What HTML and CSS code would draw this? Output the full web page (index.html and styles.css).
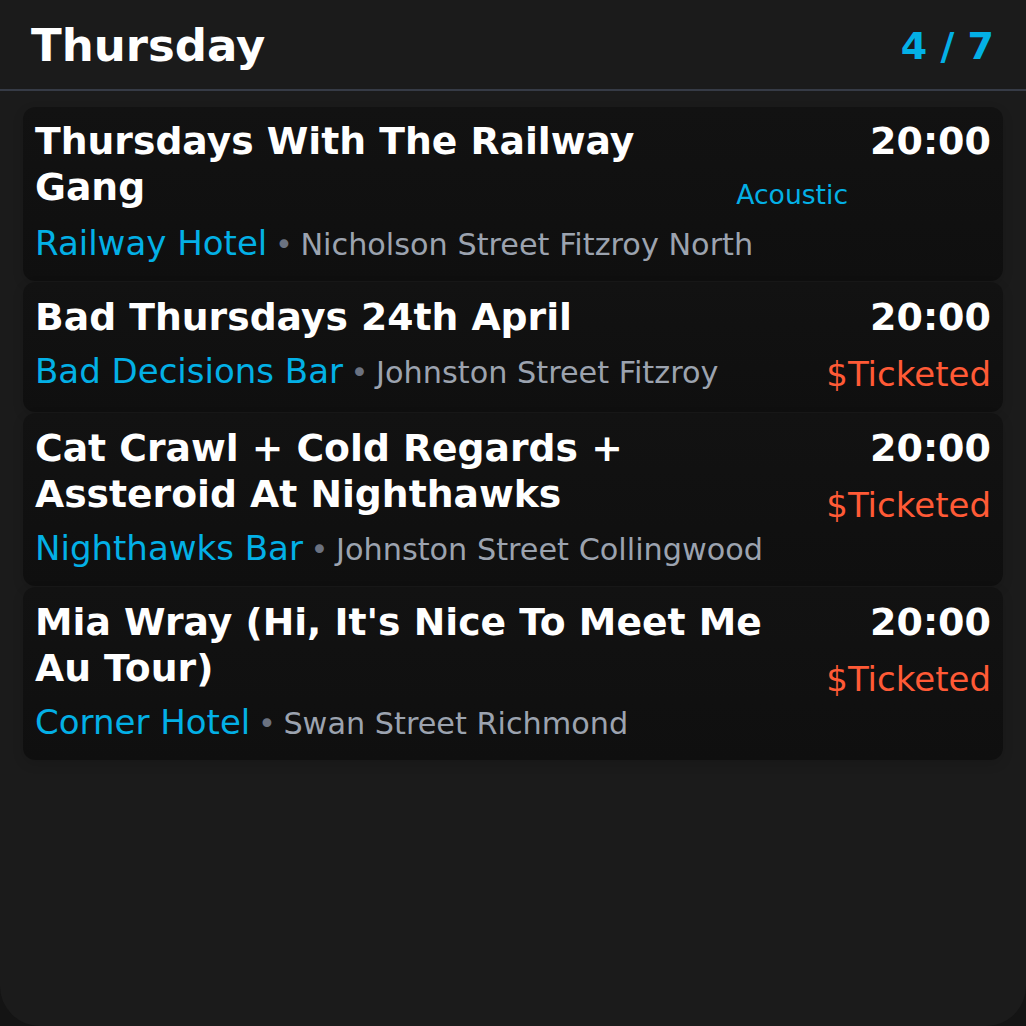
FILE: index.html
```html
<!DOCTYPE html>
<html lang="en">
<head>
<meta charset="utf-8">
<title>Thursday</title>
<link rel="stylesheet" href="styles.css">
</head>
<body>
<div class="screen">
  <header class="header">
    <h1 class="day">Thursday</h1>
    <div class="counter">4 / 7</div>
  </header>
  <div class="list">
    <div class="card">
      <div class="main">
        <div class="head">
          <div class="title">Thursdays With The Railway Gang</div>
          <div class="tags"><span class="tag">Acoustic</span></div>
        </div>
        <div class="venue"><span class="vname">Railway Hotel</span><span class="addr"><span class="dot"> • </span>Nicholson Street Fitzroy North</span></div>
      </div>
      <div class="side">
        <div class="time">20:00</div>
      </div>
    </div>
    <div class="card">
      <div class="main">
        <div class="head">
          <div class="title">Bad Thursdays 24th April</div>
        </div>
        <div class="venue"><span class="vname">Bad Decisions Bar</span><span class="addr"><span class="dot"> • </span>Johnston Street Fitzroy</span></div>
      </div>
      <div class="side">
        <div class="time">20:00</div>
        <div class="price">$Ticketed</div>
      </div>
    </div>
    <div class="card">
      <div class="main">
        <div class="head">
          <div class="title">Cat Crawl + Cold Regards + Assteroid At Nighthawks</div>
        </div>
        <div class="venue"><span class="vname">Nighthawks Bar</span><span class="addr"><span class="dot"> • </span>Johnston Street Collingwood</span></div>
      </div>
      <div class="side">
        <div class="time">20:00</div>
        <div class="price">$Ticketed</div>
      </div>
    </div>
    <div class="card">
      <div class="main">
        <div class="head">
          <div class="title">Mia Wray (Hi, It's Nice To Meet Me Au Tour)</div>
        </div>
        <div class="venue"><span class="vname">Corner Hotel</span><span class="addr"><span class="dot"> • </span>Swan Street Richmond</span></div>
      </div>
      <div class="side">
        <div class="time">20:00</div>
        <div class="price">$Ticketed</div>
      </div>
    </div>
  </div>
</div>
</body>
</html>
```

FILE: styles.css
```css
html, body {
  margin: 0;
  padding: 0;
  background: #141414;
}
body {
  font-family: "DejaVu Sans", "Liberation Sans", sans-serif;
  color: #ffffff;
}
.screen {
  height: 1026px;
  background: #1b1b1b;
  border-radius: 0 0 40px 40px;
  overflow: hidden;
}
.header {
  display: flex;
  justify-content: space-between;
  align-items: center;
  height: 87px;
  padding: 2px 32px 0 31px;
  border-bottom: 2px solid #363b46;
}
.day {
  margin: 0;
  font-size: 45px;
  font-weight: 700;
  line-height: 1;
}
.counter {
  font-size: 38px;
  font-weight: 700;
  line-height: 1;
  color: #03b0e6;
}
.list {
  display: flex;
  flex-direction: column;
  gap: 1px;
  padding: 16px 23px 0;
}
.card {
  display: flex;
  gap: 20px;
  padding: 11px 12px 17px;
  border-radius: 12px;
  background: linear-gradient(#121212, #0f0f0f);
  box-shadow: 0 4px 12px rgba(0, 0, 0, 0.12);
}
.card + .card {
  padding-top: 12px;
  padding-bottom: 17px;
}
.main {
  flex: 1;
  min-width: 0;
}
.head {
  display: flex;
  align-items: flex-end;
  gap: 16px;
}
.title {
  flex: 1;
  min-width: 0;
  font-size: 37.7px;
  font-weight: 700;
  line-height: 46px;
}
.tags {
  flex-shrink: 0;
  margin-right: 2px;
}
.tag {
  display: block;
  font-size: 26.6px;
  line-height: 30px;
  color: #03b0e6;
}
.venue {
  margin-top: 12px;
  font-size: 34px;
  line-height: 42px;
  white-space: nowrap;
}
.card + .card .venue {
  margin-top: 10px;
}
.vname {
  color: #03b0e6;
}
.addr {
  font-size: 30.3px;
  line-height: 1;
  color: #9ca3af;
}
.dot {
  color: #6b7280;
  word-spacing: -2px;
}
.side {
  flex-shrink: 0;
  text-align: right;
}
.time {
  font-size: 38px;
  font-weight: 700;
  line-height: 46px;
}
.price {
  margin-top: 13px;
  font-size: 34px;
  line-height: 42px;
  color: #ff5a36;
}
```
